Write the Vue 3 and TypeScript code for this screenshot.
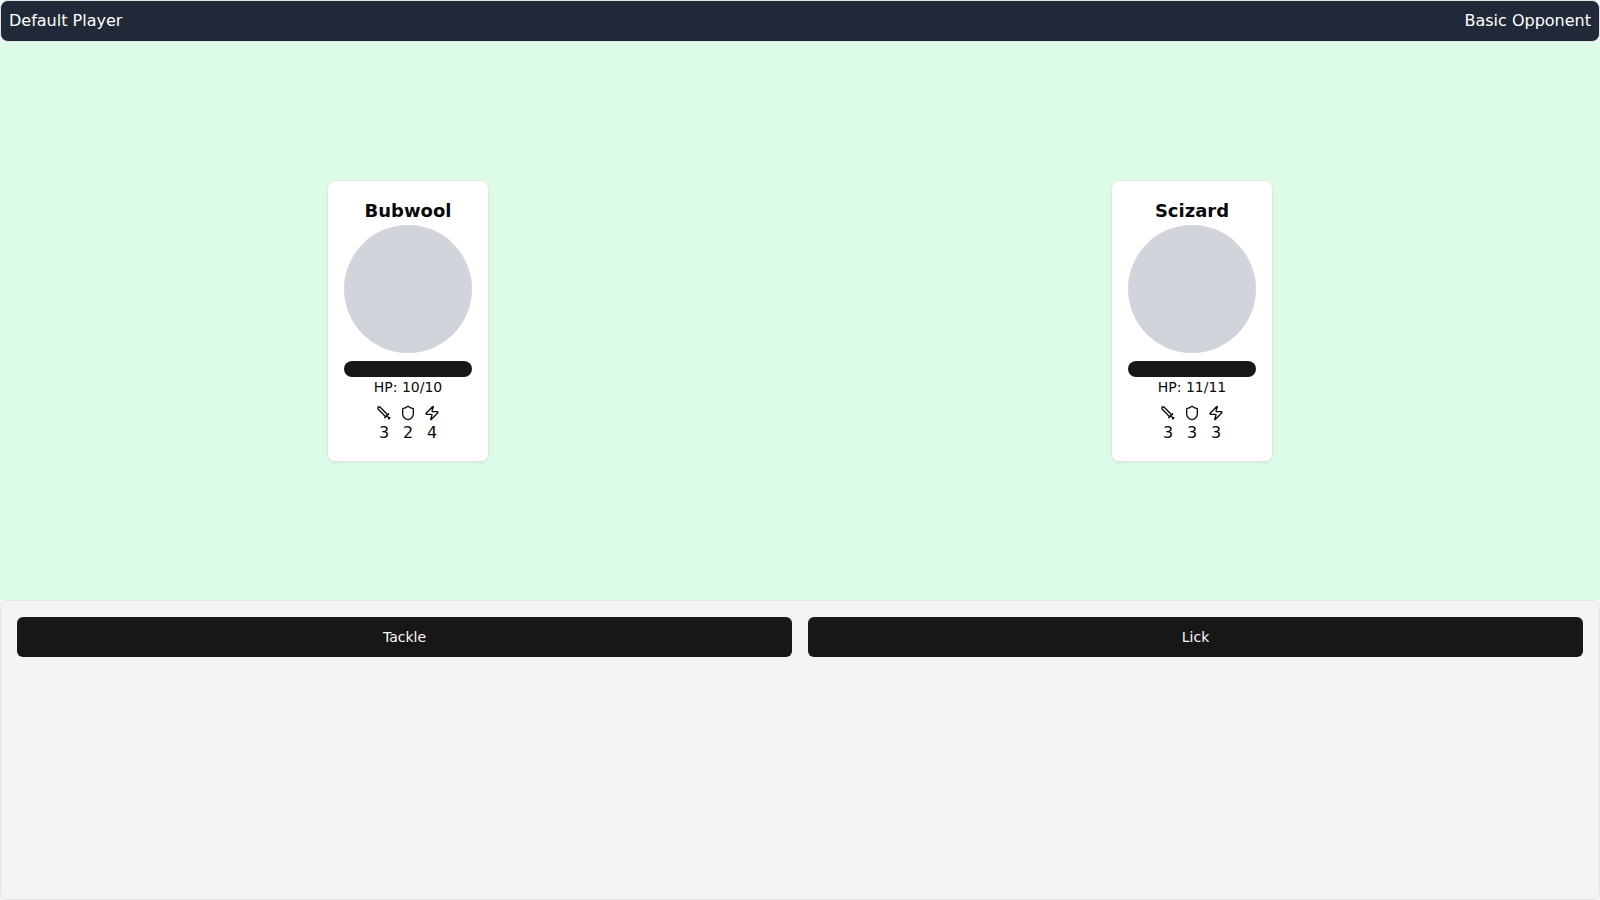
<script setup lang="ts">
interface Creature {
  name: string
  hp: number
  maxHp: number
  attack: number
  defense: number
  speed: number
}

const playerName = 'Default Player'
const opponentName = 'Basic Opponent'

const creatures: Creature[] = [
  { name: 'Bubwool', hp: 10, maxHp: 10, attack: 3, defense: 2, speed: 4 },
  { name: 'Scizard', hp: 11, maxHp: 11, attack: 3, defense: 3, speed: 3 },
]

const skills: string[] = ['Tackle', 'Lick']
</script>

<template>
  <div class="battle">
    <header class="topbar">
      <span>{{ playerName }}</span>
      <span>{{ opponentName }}</span>
    </header>

    <main class="field">
      <section v-for="c in creatures" :key="c.name" class="side">
        <article class="card">
          <h2 class="name">{{ c.name }}</h2>
          <div class="portrait"></div>
          <div class="health">
            <div class="health-fill" :style="{ width: (c.hp / c.maxHp) * 100 + '%' }"></div>
          </div>
          <p class="hp">HP: {{ c.hp }}/{{ c.maxHp }}</p>
          <div class="stats">
            <div class="stat">
              <svg class="icon" viewBox="0 0 24 24" aria-hidden="true">
                <polyline points="14.5 17.5 3 6 3 3 6 3 17.5 14.5" />
                <line x1="13" x2="19" y1="19" y2="13" />
                <line x1="16" x2="20" y1="16" y2="20" />
                <line x1="19" x2="21" y1="21" y2="19" />
              </svg>
              <span>{{ c.attack }}</span>
            </div>
            <div class="stat">
              <svg class="icon" viewBox="0 0 24 24" aria-hidden="true">
                <path d="M20 13c0 5-3.5 7.5-7.66 8.95a1 1 0 0 1-.67-.01C7.5 20.5 4 18 4 13V6a1 1 0 0 1 1-1c2 0 4.5-1.2 6.24-2.72a1.17 1.17 0 0 1 1.52 0C14.51 3.81 17 5 19 5a1 1 0 0 1 1 1z" />
              </svg>
              <span>{{ c.defense }}</span>
            </div>
            <div class="stat">
              <svg class="icon" viewBox="0 0 24 24" aria-hidden="true">
                <path d="M4 14a1 1 0 0 1-.78-1.63l9.9-10.2a.5.5 0 0 1 .86.46l-1.92 6.02A1 1 0 0 0 13 10h7a1 1 0 0 1 .78 1.63l-9.9 10.2a.5.5 0 0 1-.86-.46l1.92-6.02A1 1 0 0 0 11 14z" />
              </svg>
              <span>{{ c.speed }}</span>
            </div>
          </div>
        </article>
      </section>
    </main>

    <footer class="panel">
      <button v-for="s in skills" :key="s" type="button" class="skill">{{ s }}</button>
    </footer>
  </div>
</template>

<style>
body {
  margin: 0;
}
</style>

<style scoped>
.battle,
.battle * {
  box-sizing: border-box;
}

.battle {
  display: grid;
  grid-template-rows: auto 1fr auto;
  min-height: 100vh;
  background: #f3f4f6;
  color: #0a0a0a;
  font-family: "DejaVu Sans", sans-serif;
  font-size: 16px;
  line-height: 24px;
}

.topbar {
  display: flex;
  justify-content: space-between;
  padding: 8px;
  border: 1px solid #e5e5e5;
  border-radius: 8px;
  background: #1f2937;
  color: #fff;
}

.field {
  display: flex;
  align-items: center;
  justify-content: space-between;
  padding: 16px;
  background: #dcfce7;
}

.side {
  display: flex;
  flex: 1;
  justify-content: center;
}

.card {
  display: flex;
  flex-direction: column;
  align-items: center;
  padding: 16px;
  border: 1px solid #e5e5e5;
  border-radius: 8px;
  background: #fff;
  box-shadow: 0 1px 2px rgb(0 0 0 / 5%);
}

.name {
  margin: 0;
  font-size: 18px;
  font-weight: 700;
  line-height: 28px;
}

.portrait {
  width: 128px;
  height: 128px;
  border-radius: 50%;
  background: #d1d5db;
}

.health {
  width: 100%;
  height: 16px;
  margin-top: 8px;
  overflow: hidden;
  border-radius: 8px;
  background: #f5f5f5;
}

.health-fill {
  height: 100%;
  background: #171717;
}

.hp {
  margin: 0;
  font-size: 14px;
  line-height: 20px;
}

.stats {
  display: flex;
  gap: 8px;
  margin-top: 8px;
}

.stat {
  display: flex;
  flex-direction: column;
  align-items: center;
}

.icon {
  width: 16px;
  height: 16px;
  fill: none;
  stroke: currentColor;
  stroke-width: 2;
  stroke-linecap: round;
  stroke-linejoin: round;
}

.panel {
  display: grid;
  grid-template-columns: 1fr 1fr;
  gap: 16px;
  align-items: start;
  min-height: calc(100vh / 3);
  padding: 16px;
  border: 1px solid #e5e5e5;
  border-radius: 8px;
  background: #f3f4f6;
}

.skill {
  height: 40px;
  padding: 8px 16px;
  border: 0;
  border-radius: 6px;
  background: #171717;
  color: #fafafa;
  font: inherit;
  font-size: 14px;
  line-height: 20px;
  cursor: pointer;
}
</style>
